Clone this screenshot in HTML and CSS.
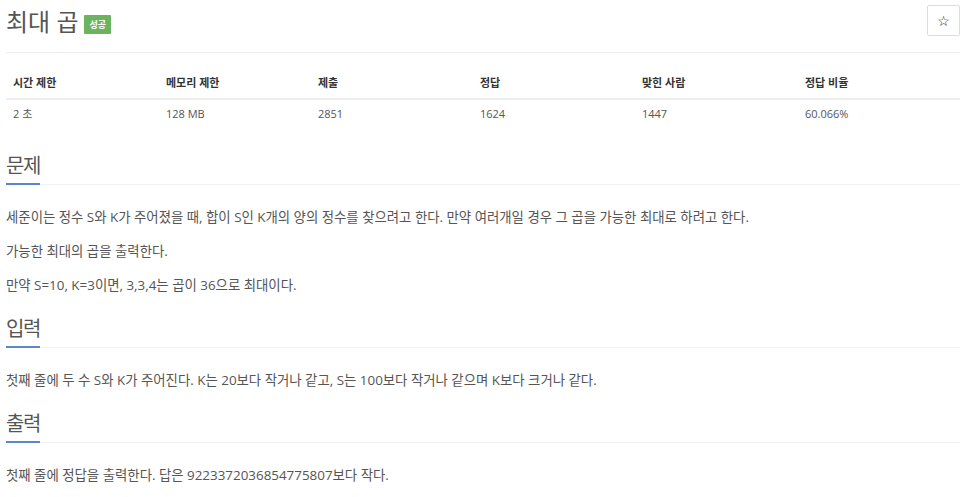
FILE: index.html
```html
<!DOCTYPE html>
<html lang="ko">
<head>
<meta charset="utf-8">
<link rel="stylesheet" href="styles.css">
</head>
<body>
<div class="page">
  <div class="headline">
    <h2 class="title"><span>최대 곱</span><span class="badge">성공</span></h2>
    <button class="star" type="button">☆</button>
  </div>
  <table class="info">
    <thead>
      <tr><th>시간 제한</th><th>메모리 제한</th><th>제출</th><th>정답</th><th>맞힌 사람</th><th>정답 비율</th></tr>
    </thead>
    <tbody>
      <tr><td>2 초</td><td>128 MB</td><td>2851</td><td>1624</td><td>1447</td><td>60.066%</td></tr>
    </tbody>
  </table>
  <section class="sec">
    <div class="sec-head"><h3>문제</h3></div>
    <p>세준이는 정수 S와 K가 주어졌을 때, 합이 S인 K개의 양의 정수를 찾으려고 한다. 만약 여러개일 경우 그 곱을 가능한 최대로 하려고 한다.</p>
    <p>가능한 최대의 곱을 출력한다.</p>
    <p>만약 S=10, K=3이면, 3,3,4는 곱이 36으로 최대이다.</p>
  </section>
  <section class="sec">
    <div class="sec-head"><h3>입력</h3></div>
    <p>첫째 줄에 두 수 S와 K가 주어진다. K는 20보다 작거나 같고, S는 100보다 작거나 같으며 K보다 크거나 같다.</p>
  </section>
  <section class="sec">
    <div class="sec-head"><h3>출력</h3></div>
    <p>첫째 줄에 정답을 출력한다. 답은 9223372036854775807보다 작다.</p>
  </section>
</div>
</body>
</html>
```
FILE: styles.css
```css
* { box-sizing: border-box; }
html, body { margin: 0; padding: 0; background: #fff; }
body {
  font-family: "Open Sans", "Noto Sans CJK KR", sans-serif;
  color: #555;
}
.page { padding: 0 6px; width: 966px; }
.headline {
  display: flex;
  justify-content: space-between;
  align-items: flex-start;
  border-bottom: 1px solid #eee;
  padding-top: 5px;
  height: 53px;
}
.title {
  margin: 0;
  font-size: 24px;
  font-weight: 400;
  line-height: 34px;
  display: flex;
  align-items: center;
  gap: 6px;
}
.badge {
  background: #6cb35f;
  color: #fff;
  font-size: 9px;
  font-weight: 700;
  line-height: 19px;
  padding: 0 5px;
  border-radius: 1px;
  margin-top: 4px;
}
.star {
  width: 33px;
  height: 31px;
  border: 1px solid #ddd;
  background: #fff;
  color: #222;
  font-size: 14px;
  font-weight: 700;
  padding: 0;
  font-family: "DejaVu Sans", sans-serif;
  border-radius: 2px;
}
.info {
  width: 100%;
  border-collapse: collapse;
  margin-top: 15px;
  font-size: 11px;
}
.info th {
  text-align: left;
  font-weight: 700;
  color: #333;
  padding: 8px 7px 8px;
  line-height: 14px;
  border-bottom: 2px solid #eee;
}
.info td {
  padding: 6px 7px 7px;
  line-height: 16px;
}
.info th:nth-child(1) { width: 153px; }
.info th:nth-child(2) { width: 152px; }
.info th:nth-child(3) { width: 162px; }
.info th:nth-child(4) { width: 162px; }
.info th:nth-child(5) { width: 163px; }
.sec { margin-top: 22px; }
.sec-head {
  border-bottom: 1px solid #f2f2f2;
  height: 34px;
}
.sec-head h3 {
  margin: 0;
  display: inline-block;
  font-size: 20px;
  font-weight: 400;
  letter-spacing: -1.5px;
  line-height: 30px;
  height: 34px;
  border-bottom: 2px solid #5b87c8;
}
.sec p {
  margin: 25px 0 0;
  font-size: 13.4px;
  line-height: 14px;
}
.sec p + p { margin-top: 20px; }
```
